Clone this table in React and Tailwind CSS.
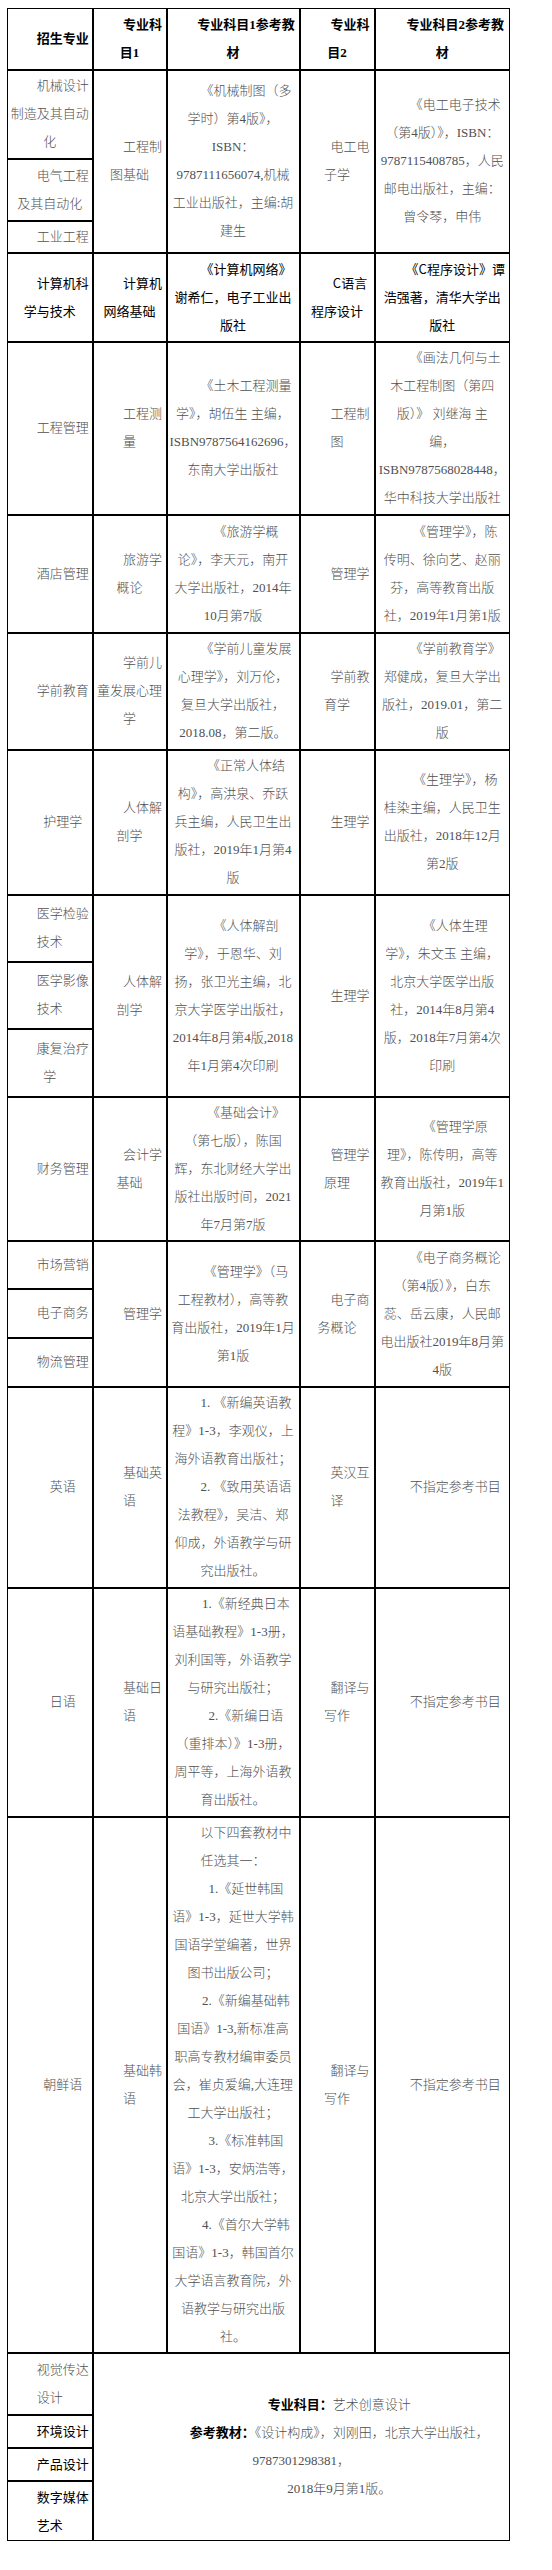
import React from 'react';

const SONG = "font-['Liberation_Serif','Noto_Sans_CJK_SC',serif] text-[13px] font-light text-[#505050]";
const SANS = "font-['Noto_Sans_CJK_SC',sans-serif] text-[13px] text-black";
const HEAD = "font-['Liberation_Serif','Noto_Sans_CJK_SC',serif] text-[13px] font-bold text-black";

const edges = ({ l, r, t, b }) =>
  [
    l ? 'border-l' : 'border-l-2',
    r ? 'border-r' : 'border-r-2',
    t ? 'border-t' : 'border-t-2',
    b ? 'border-b' : 'border-b-2',
    'border-black',
  ].join(' ');

function Cell({ text, kind = 'song', l, r, t, b, ...rest }) {
  const font = kind === 'sans' ? SANS : kind === 'head' ? HEAD : SONG;
  const paras = typeof text[0] === 'string' ? [text] : text;
  return (
    <td className={`${edges({ l, r, t, b })} align-middle px-[2px] py-0`} {...rest}>
      {paras.map((lines, i) => (
        <p key={i} className={`text-center indent-[2em] whitespace-nowrap leading-[28px] ${font}`}>
          {lines.map((line, j) => (
            <span key={j}>
              {j > 0 && <br />}
              {line}
            </span>
          ))}
        </p>
      ))}
    </td>
  );
}

const NONE = ['不指定参考书目'];

export default function App() {
  return (
    <div className="min-h-[2570px] bg-white pt-[8px] pl-[7px]">
      <table className="w-[502px] table-fixed border-collapse">
        <colgroup>
          <col className="w-[85px]" />
          <col className="w-[74px]" />
          <col className="w-[133px]" />
          <col className="w-[75px]" />
          <col className="w-[135px]" />
        </colgroup>
        <tbody>
          <tr className="h-[61px]">
            <Cell kind="head" l t text={['招生专业']} />
            <Cell kind="head" t text={['专业科', '目1']} />
            <Cell kind="head" t text={['专业科目1参考教', '材']} />
            <Cell kind="head" t text={['专业科', '目2']} />
            <Cell kind="head" t r text={['专业科目2参考教', '材']} />
          </tr>

          {/* 机械类 */}
          <tr className="h-[89px]">
            <Cell l text={['机械设计', '制造及其自动', '化']} />
            <Cell rowSpan={3} text={['工程制', '图基础']} />
            <Cell
              rowSpan={3}
              text={['《机械制图（多', '学时）第4版》，', 'ISBN：', '9787111656074,机械', '工业出版社，主编:胡', '建生']}
            />
            <Cell rowSpan={3} text={['电工电', '子学']} />
            <Cell
              rowSpan={3}
              r
              text={['《电工电子技术', '（第4版）》，ISBN：', '9787115408785，人民', '邮电出版社，主编：', '曾令琴，申伟']}
            />
          </tr>
          <tr className="h-[62px]">
            <Cell l text={['电气工程', '及其自动化']} />
          </tr>
          <tr className="h-[32px]">
            <Cell l text={['工业工程']} />
          </tr>

          <tr className="h-[89px]">
            <Cell kind="sans" l text={['计算机科', '学与技术']} />
            <Cell kind="sans" text={['计算机', '网络基础']} />
            <Cell kind="sans" text={['《计算机网络》', '谢希仁，电子工业出', '版社']} />
            <Cell kind="sans" text={['C语言', '程序设计']} />
            <Cell kind="sans" r text={['《C程序设计》谭', '浩强著，清华大学出', '版社']} />
          </tr>

          <tr className="h-[173px]">
            <Cell l text={['工程管理']} />
            <Cell text={['工程测', '量']} />
            <Cell text={['《土木工程测量', '学》，胡伍生 主编，', 'ISBN9787564162696，', '东南大学出版社']} />
            <Cell text={['工程制', '图']} />
            <Cell
              r
              text={['《画法几何与土', '木工程制图（第四', '版）》 刘继海 主', '编，', 'ISBN9787568028448，', '华中科技大学出版社']}
            />
          </tr>

          <tr className="h-[118px]">
            <Cell l text={['酒店管理']} />
            <Cell text={['旅游学', '概论']} />
            <Cell text={['《旅游学概', '论》，李天元，南开', '大学出版社，2014年', '10月第7版']} />
            <Cell text={['管理学']} />
            <Cell r text={['《管理学》，陈', '传明、徐向艺、赵丽', '芬，高等教育出版', '社，2019年1月第1版']} />
          </tr>

          <tr className="h-[117px]">
            <Cell l text={['学前教育']} />
            <Cell text={['学前儿', '童发展心理', '学']} />
            <Cell text={['《学前儿童发展', '心理学》，刘万伦，', '复旦大学出版社，', '2018.08，第二版。']} />
            <Cell text={['学前教', '育学']} />
            <Cell r text={['《学前教育学》', '郑健成，复旦大学出', '版社，2019.01，第二', '版']} />
          </tr>

          <tr className="h-[145px]">
            <Cell l text={['护理学']} />
            <Cell text={['人体解', '剖学']} />
            <Cell text={['《正常人体结', '构》，高洪泉、乔跃', '兵主编，人民卫生出', '版社，2019年1月第4', '版']} />
            <Cell text={['生理学']} />
            <Cell r text={['《生理学》，杨', '桂染主编，人民卫生', '出版社，2018年12月', '第2版']} />
          </tr>

          {/* 医学类 */}
          <tr className="h-[67px]">
            <Cell l text={['医学检验', '技术']} />
            <Cell rowSpan={3} text={['人体解', '剖学']} />
            <Cell
              rowSpan={3}
              text={['《人体解剖', '学》，于恩华、刘', '扬，张卫光主编，北', '京大学医学出版社，', '2014年8月第4版,2018', '年1月第4次印刷']}
            />
            <Cell rowSpan={3} text={['生理学']} />
            <Cell
              rowSpan={3}
              r
              text={['《人体生理', '学》，朱文玉 主编，', '北京大学医学出版', '社，2014年8月第4', '版，2018年7月第4次', '印刷']}
            />
          </tr>
          <tr className="h-[67px]">
            <Cell l text={['医学影像', '技术']} />
          </tr>
          <tr className="h-[68px]">
            <Cell l text={['康复治疗', '学']} />
          </tr>

          <tr className="h-[144px]">
            <Cell l text={['财务管理']} />
            <Cell text={['会计学', '基础']} />
            <Cell text={['《基础会计》', '（第七版），陈国', '辉，东北财经大学出', '版社出版时间，2021', '年7月第7版']} />
            <Cell text={['管理学', '原理']} />
            <Cell r text={['《管理学原', '理》，陈传明，高等', '教育出版社，2019年1', '月第1版']} />
          </tr>

          {/* 管理类 */}
          <tr className="h-[48px]">
            <Cell l text={['市场营销']} />
            <Cell rowSpan={3} text={['管理学']} />
            <Cell rowSpan={3} text={['《管理学》（马', '工程教材），高等教', '育出版社，2019年1月', '第1版']} />
            <Cell rowSpan={3} text={['电子商', '务概论']} />
            <Cell
              rowSpan={3}
              r
              text={['《电子商务概论', '（第4版）》，白东', '蕊、岳云康，人民邮', '电出版社2019年8月第', '4版']}
            />
          </tr>
          <tr className="h-[49px]">
            <Cell l text={['电子商务']} />
          </tr>
          <tr className="h-[49px]">
            <Cell l text={['物流管理']} />
          </tr>

          <tr className="h-[201px]">
            <Cell l text={['英语']} />
            <Cell text={['基础英', '语']} />
            <Cell
              text={[
                ['1. 《新编英语教', '程》1-3，李观仪，上', '海外语教育出版社；'],
                ['2. 《致用英语语', '法教程》，吴洁、郑', '仰成，外语教学与研', '究出版社。'],
              ]}
            />
            <Cell text={['英汉互', '译']} />
            <Cell r text={NONE} />
          </tr>

          <tr className="h-[229px]">
            <Cell l text={['日语']} />
            <Cell text={['基础日', '语']} />
            <Cell
              text={[
                ['1.《新经典日本', '语基础教程》1-3册，', '刘利国等，外语教学', '与研究出版社；'],
                ['2.《新编日语', '（重排本）》1-3册，', '周平等，上海外语教', '育出版社。'],
              ]}
            />
            <Cell text={['翻译与', '写作']} />
            <Cell r text={NONE} />
          </tr>

          <tr className="h-[536px]">
            <Cell l text={['朝鲜语']} />
            <Cell text={['基础韩', '语']} />
            <Cell
              text={[
                ['以下四套教材中', '任选其一：'],
                ['1.《延世韩国', '语》1-3，延世大学韩', '国语学堂编著，世界', '图书出版公司；'],
                ['2.《新编基础韩', '国语》1-3,新标准高', '职高专教材编审委员', '会，崔贞爱编,大连理', '工大学出版社；'],
                ['3.《标准韩国', '语》1-3，安炳浩等，', '北京大学出版社；'],
                ['4.《首尔大学韩', '国语》1-3，韩国首尔', '大学语言教育院，外', '语教学与研究出版', '社。'],
              ]}
            />
            <Cell text={['翻译与', '写作']} />
            <Cell r text={NONE} />
          </tr>

          {/* 艺术类 */}
          <tr className="h-[62px]">
            <Cell l text={['视觉传达', '设计']} />
            <td rowSpan={4} colSpan={4} className={`${edges({ r: true, b: true })} align-middle p-0`}>
              <div className="text-[13px] leading-[28px] whitespace-nowrap text-center font-['Liberation_Serif','Noto_Sans_CJK_SC',serif] font-light text-[#505050]">
                <p className="pl-[76px]">
                  <span className="font-bold text-black">专业科目：</span>艺术创意设计
                </p>
                <p className="pl-[76px]">
                  <span className="font-bold text-black">参考教材：</span>《设计构成》，刘刚田，北京大学出版社，
                </p>
                <p>9787301298381，</p>
                <p className="pl-[76px]">2018年9月第1版。</p>
              </div>
            </td>
          </tr>
          <tr className="h-[33px]">
            <Cell kind="sans" l text={['环境设计']} />
          </tr>
          <tr className="h-[33px]">
            <Cell kind="sans" l text={['产品设计']} />
          </tr>
          <tr className="h-[60px]">
            <Cell kind="sans" l b text={['数字媒体', '艺术']} />
          </tr>
        </tbody>
      </table>
    </div>
  );
}
